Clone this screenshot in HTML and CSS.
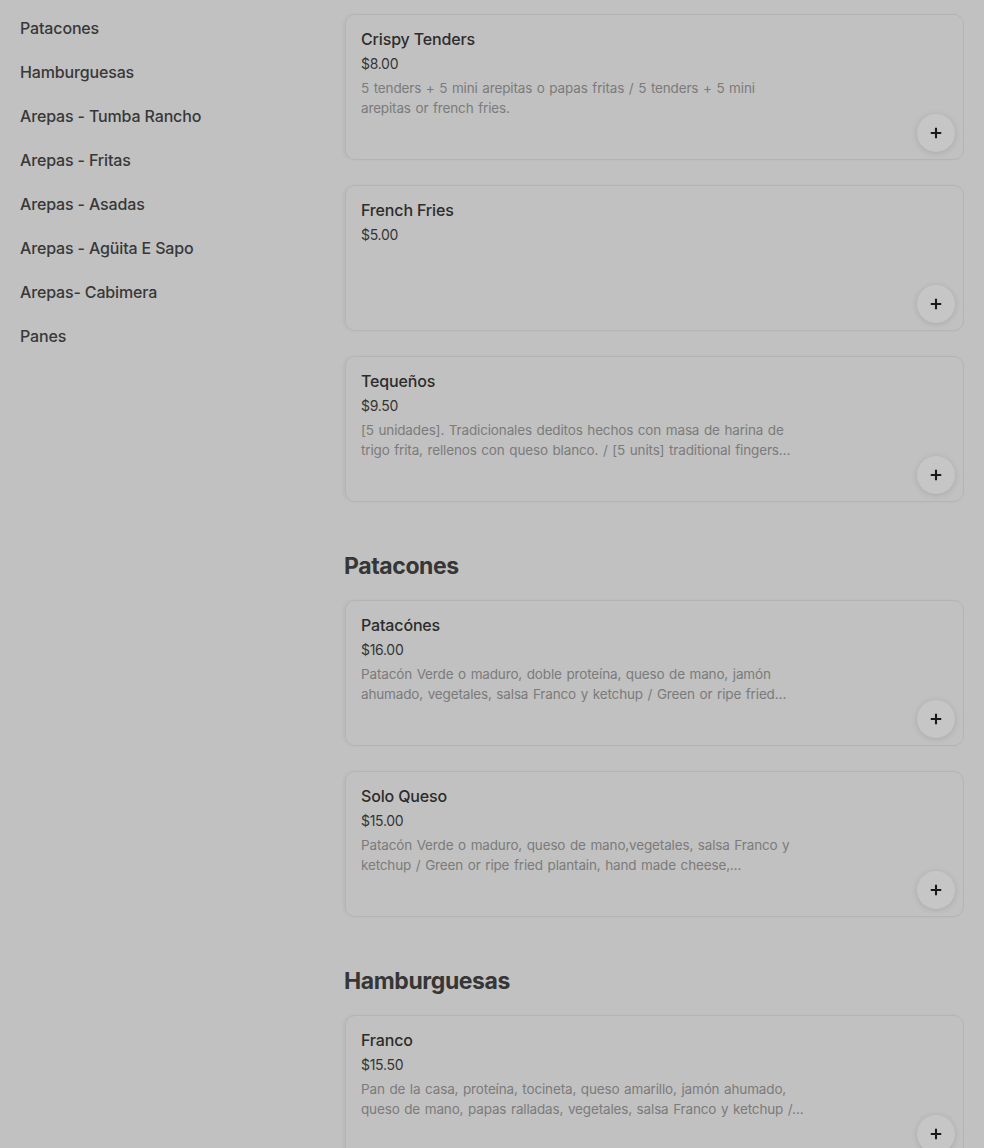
FILE: index.html
```html
<!DOCTYPE html>
<html lang="es">
<head>
<meta charset="utf-8">
<title>Menú</title>
<link rel="stylesheet" href="styles.css">
</head>
<body>
<div class="page">
  <nav class="sidebar">
    <a class="nav-item">Patacones</a>
    <a class="nav-item">Hamburguesas</a>
    <a class="nav-item">Arepas - Tumba Rancho</a>
    <a class="nav-item">Arepas - Fritas</a>
    <a class="nav-item">Arepas - Asadas</a>
    <a class="nav-item">Arepas - Agüita E Sapo</a>
    <a class="nav-item">Arepas- Cabimera</a>
    <a class="nav-item">Panes</a>
  </nav>
  <main class="menu">
    <section class="section">
      <div class="cards">
        <div class="card">
          <div class="card-title">Crispy Tenders</div>
          <div class="card-price">$8.00</div>
          <div class="card-desc">5 tenders + 5 mini arepitas o papas fritas / 5 tenders + 5 mini arepitas or french fries.</div>
          <button class="add"><svg viewBox="0 0 16 16" width="14" height="14"><path d="M8 2v12M2 8h12" stroke="#1a1a1a" stroke-width="2.4"/></svg></button>
        </div>
        <div class="card">
          <div class="card-title">French Fries</div>
          <div class="card-price">$5.00</div>
          <button class="add"><svg viewBox="0 0 16 16" width="14" height="14"><path d="M8 2v12M2 8h12" stroke="#1a1a1a" stroke-width="2.4"/></svg></button>
        </div>
        <div class="card">
          <div class="card-title">Tequeños</div>
          <div class="card-price">$9.50</div>
          <div class="card-desc">[5 unidades]. Tradicionales deditos hechos con masa de harina de trigo frita, rellenos con queso blanco. / [5 units] traditional fingers…</div>
          <button class="add"><svg viewBox="0 0 16 16" width="14" height="14"><path d="M8 2v12M2 8h12" stroke="#1a1a1a" stroke-width="2.4"/></svg></button>
        </div>
      </div>
    </section>
    <section class="section">
      <h2 class="section-title">Patacones</h2>
      <div class="cards">
        <div class="card">
          <div class="card-title">Patacónes</div>
          <div class="card-price">$16.00</div>
          <div class="card-desc">Patacón Verde o maduro, doble proteína, queso de mano, jamón ahumado, vegetales, salsa Franco y ketchup / Green or ripe fried…</div>
          <button class="add"><svg viewBox="0 0 16 16" width="14" height="14"><path d="M8 2v12M2 8h12" stroke="#1a1a1a" stroke-width="2.4"/></svg></button>
        </div>
        <div class="card">
          <div class="card-title">Solo Queso</div>
          <div class="card-price">$15.00</div>
          <div class="card-desc">Patacón Verde o maduro, queso de mano,vegetales, salsa Franco y ketchup / Green or ripe fried plantain, hand made cheese,…</div>
          <button class="add"><svg viewBox="0 0 16 16" width="14" height="14"><path d="M8 2v12M2 8h12" stroke="#1a1a1a" stroke-width="2.4"/></svg></button>
        </div>
      </div>
    </section>
    <section class="section">
      <h2 class="section-title">Hamburguesas</h2>
      <div class="cards">
        <div class="card">
          <div class="card-title">Franco</div>
          <div class="card-price">$15.50</div>
          <div class="card-desc">Pan de la casa, proteína, tocineta, queso amarillo, jamón ahumado, queso de mano, papas ralladas, vegetales, salsa Franco y ketchup /…</div>
          <button class="add"><svg viewBox="0 0 16 16" width="14" height="14"><path d="M8 2v12M2 8h12" stroke="#1a1a1a" stroke-width="2.4"/></svg></button>
        </div>
      </div>
    </section>
  </main>
</div>
</body>
</html>
```
FILE: styles.css
```css
* { box-sizing: border-box; }
html, body {
  margin: 0;
  padding: 0;
  background: #c1c1c1;
  font-family: Inter, "Noto Sans", "Liberation Sans", sans-serif;
  color: #2a2a2a;
  overflow: hidden;
}
.page {
  display: grid;
  grid-template-columns: 344px 620px;
  padding-right: 20px;
}
.sidebar {
  display: flex;
  flex-direction: column;
  padding: 6px 0 0 20px;
}
.nav-item {
  display: block;
  font-size: 16px;
  line-height: 44px;
  font-weight: 500;
  color: #383838;
  letter-spacing: -0.15px;
}
.menu {
  display: flex;
  flex-direction: column;
  padding-top: 14px;
  gap: 46px;
}
.section-title {
  margin: 0 0 16px 0;
  font-size: 23px;
  line-height: 36px;
  font-weight: 700;
  color: #363636;
  letter-spacing: -0.4px;
}
.cards {
  display: flex;
  flex-direction: column;
  gap: 25px;
}
.card {
  position: relative;
  height: 146px;
  margin-left: 1px;
  border: 1px solid #b4b4b4;
  border-radius: 10px;
  padding: 14px 16px 16px 15px;
  box-shadow: -2px 0 3px rgba(0,0,0,0.04);
}
.card-title {
  font-size: 16px;
  line-height: 20px;
  font-weight: 500;
  color: #2c2c2c;
  letter-spacing: -0.15px;
}
.card-price {
  margin-top: 5px;
  font-size: 14px;
  line-height: 20px;
  color: #353535;
  letter-spacing: -0.3px;
}
.card-desc {
  margin-top: 4px;
  max-width: 445px;
  font-size: 13.5px;
  line-height: 20px;
  color: #7b7b7b;
  letter-spacing: -0.15px;
  word-spacing: 1px;
}
.add {
  position: absolute;
  right: 8px;
  bottom: 7px;
  width: 38px;
  height: 38px;
  border-radius: 50%;
  border: none;
  background: #c6c6c6;
  box-shadow: 0 1px 6px rgba(0,0,0,0.12);
  display: flex;
  align-items: center;
  justify-content: center;
  padding: 0;
}
```
